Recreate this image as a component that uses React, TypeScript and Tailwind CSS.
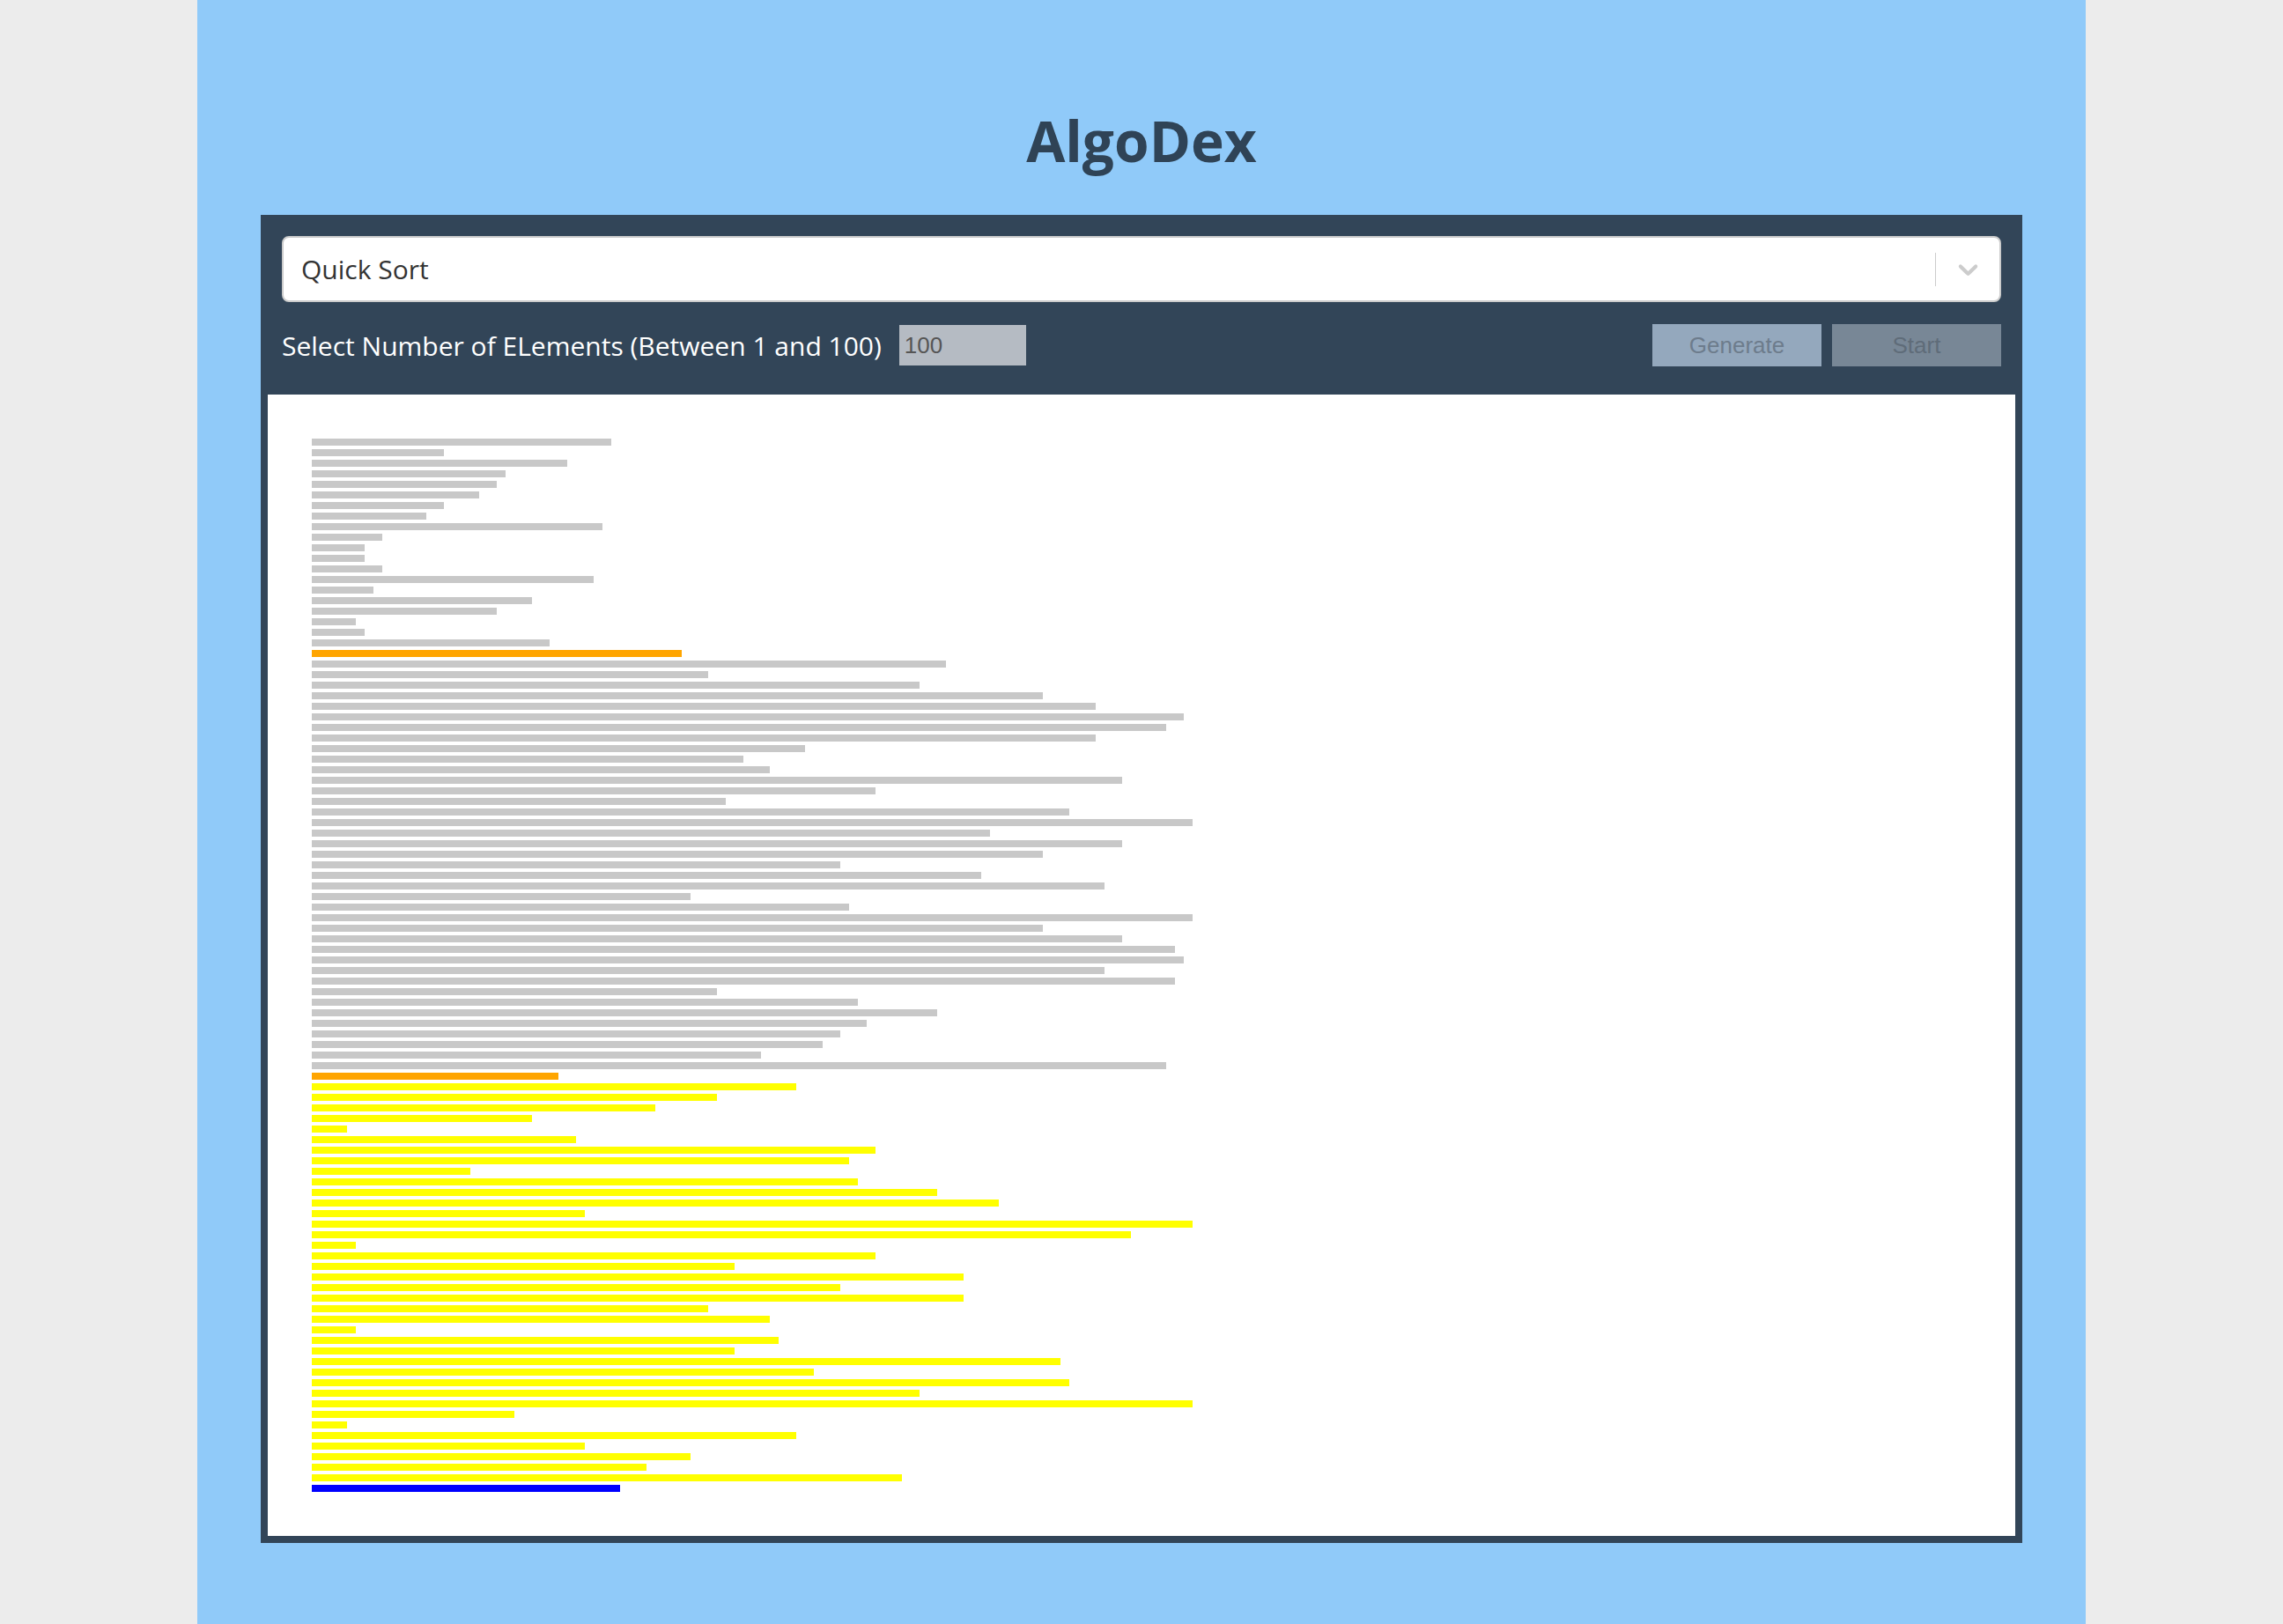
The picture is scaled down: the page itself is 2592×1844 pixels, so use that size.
import React from "react";

const values = [
  34, 15, 29, 22, 21, 19, 15, 13, 33, 8, 6, 6, 8, 32, 7, 25, 21, 5, 6, 27, 42, 72, 45, 69, 83,
  89, 99, 97, 89, 56, 49, 52, 92, 64, 47, 86, 100, 77, 92, 83, 60, 76, 90, 43, 61, 100, 83, 92, 98, 99,
  90, 98, 46, 62, 71, 63, 60, 58, 51, 97, 28, 55, 46, 39, 25, 4, 30, 64, 61, 18, 62, 71, 78, 31, 100,
  93, 5, 64, 48, 74, 60, 74, 45, 52, 5, 53, 48, 85, 57, 86, 69, 100, 23, 4, 55, 31, 43, 38, 67, 35,
];

function barColor(i: number) {
  if (i === 20 || i === 60) return "bg-[#ffa500]";
  if (i === 99) return "bg-[#0000ff]";
  if (i > 60) return "bg-[#ffff00]";
  return "bg-[#c8c8c8]";
}

function AlgoSelect() {
  return (
    <div className="flex items-center h-[75px] bg-white border-2 border-[#cccccc] rounded-[8px]">
      <div className="flex-grow pl-5 text-[30px] text-[#333333]">Quick Sort</div>
      <div className="w-px h-[38px] bg-[#cccccc]" />
      <div className="w-[72px] flex items-center justify-center">
        <svg viewBox="0 0 20 20" className="w-[37px] h-[37px] fill-[#cccccc]">
          <path d="M4.516 7.548c0.436-0.446 1.043-0.481 1.576 0l3.908 3.747 3.908-3.747c0.533-0.481 1.141-0.446 1.574 0 0.436 0.445 0.408 1.197 0 1.615-0.406 0.418-4.695 4.502-4.695 4.502-0.217 0.223-0.502 0.335-0.787 0.335s-0.57-0.112-0.789-0.335c0 0-4.287-4.084-4.695-4.502s-0.436-1.17 0-1.615z" />
        </svg>
      </div>
    </div>
  );
}

export default function App() {
  return (
    <div className="min-h-screen bg-[#ececec] flex justify-center font-['Open_Sans',sans-serif]">
      <div className="w-[2144px] min-h-screen bg-[#90caf9] flex flex-col items-center pt-[128px] pb-[100px]">
        <h1 className="text-[64px] leading-[64px] font-bold text-[#2f4356] mb-[52px]">AlgoDex</h1>

        <div className="w-[2000px] bg-[#324558] p-2">
          <div className="px-4 pt-4 pb-8">
            <AlgoSelect />
            <div className="flex items-center mt-[25px] h-12">
              <span className="text-white text-[30px]">Select Number of ELements (Between 1 and 100)</span>
              <input
                disabled
                value="100"
                readOnly
                className="ml-5 w-[144px] h-[46px] bg-[#b5bbc3] pl-[6px] text-[26px] text-[#555555] font-['Liberation_Sans',sans-serif]"
              />
              <div className="ml-auto flex gap-3">
                <button className="w-[192px] h-12 bg-[#94a8bd] text-[26px] text-[#6d7c8c] font-['Liberation_Sans',sans-serif]">
                  Generate
                </button>
                <button className="w-[192px] h-12 bg-[#788796] text-[26px] text-[#5f6c79] font-['Liberation_Sans',sans-serif]">
                  Start
                </button>
              </div>
            </div>
          </div>

          <div className="bg-white p-[50px] flex flex-col gap-1">
            {values.map((v, i) => (
              <div key={i} className={`h-2 ${barColor(i)}`} style={{ width: v * 10 }} />
            ))}
          </div>
        </div>
      </div>
    </div>
  );
}
